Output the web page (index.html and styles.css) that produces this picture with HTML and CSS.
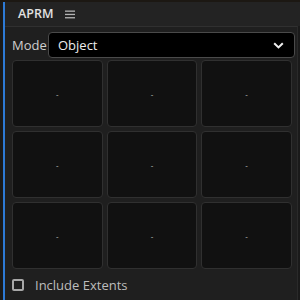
FILE: index.html
```html
<!DOCTYPE html>
<html lang="en">
<head>
  <meta charset="UTF-8" />
  <title>APRM</title>
  <link rel="stylesheet" href="styles.css">
</head>
<body>
  <div class="frame">
    <div class="panel">
      <!-- HEADER -->
      <header class="panel-header">
        <span class="panel-title">APRM</span>
        <span class="menu-icon">
          <svg width="10" height="9" viewBox="0 0 10 9">
            <rect x="0" y="0.5" width="10" height="1.3" fill="#b4b4b4"/>
            <rect x="0" y="3.8" width="10" height="1.3" fill="#b4b4b4"/>
            <rect x="0" y="7.1" width="10" height="1.3" fill="#b4b4b4"/>
          </svg>
        </span>
      </header>

      <!-- CONTENT -->
      <div class="panel-body">
        <div class="mode-row">
          <label class="mode-label">Mode</label>
          <div class="select">
            <span>Object</span>
            <svg class="chevron" width="11" height="7" viewBox="0 0 11 7">
              <path d="M1.2 1.2 L5.5 5.4 L9.8 1.2" fill="none" stroke="#f0f0f0" stroke-width="2"/>
            </svg>
          </div>
        </div>

        <div class="cell-grid">
          <div class="cell"><span class="mark">-</span></div>
          <div class="cell"><span class="mark">-</span></div>
          <div class="cell"><span class="mark">-</span></div>
          <div class="cell"><span class="mark">-</span></div>
          <div class="cell"><span class="mark">-</span></div>
          <div class="cell"><span class="mark">-</span></div>
          <div class="cell"><span class="mark">-</span></div>
          <div class="cell"><span class="mark">-</span></div>
          <div class="cell"><span class="mark">-</span></div>
        </div>

        <div class="footer-row">
          <span class="checkbox"></span>
          <span class="check-label">Include Extents</span>
        </div>
      </div>
    </div>
  </div>
</body>
</html>
```

FILE: styles.css
```css
:root {
  --bg-outer: #1a1a1a;
  --bg-header: #232323;
  --bg-body: #1f1f1f;
  --bg-cell: #111111;
  --line: #303030;
  --accent: #2d7ad6;
  --text: #d6d6d6;
}

* {
  margin: 0;
  padding: 0;
  box-sizing: border-box;
}
body {
  width: 300px;
  height: 300px;
  background-color: var(--bg-outer);
  font-family: "Open Sans", "Noto Sans", Arial, sans-serif;
  color: var(--text);
  overflow: hidden;
}

.frame {
  height: 300px;
  border-top: 2px solid #1c1813;
  padding-left: 3px;
}
.panel {
  height: 298px;
  border-left: 2px solid var(--accent);
  display: flex;
  flex-direction: column;
}

/* HEADER */
.panel-header {
  height: 24px;
  background-color: var(--bg-header);
  display: flex;
  align-items: center;
  padding-left: 13px;
  gap: 12px;
}
.panel-title {
  font-size: 12.5px;
  font-weight: 600;
  color: #e2e2e2;
  line-height: 1;
}
.menu-icon {
  display: flex;
  margin-top: 1px;
}

/* BODY */
.panel-body {
  flex: 1;
  background-color: var(--bg-body);
  border-top: 1px solid var(--line);
  border-right: 1px solid #2a2a2a;
  margin-right: 2px;
  padding: 5px 2px 0 7px;
  display: flex;
  flex-direction: column;
}

.mode-row {
  display: flex;
  align-items: center;
  gap: 6px;
  height: 26px;
}
.mode-label {
  font-size: 13px;
  color: #cfcfcf;
  width: 30px;
}
.select {
  flex: 1;
  height: 26px;
  background-color: #000;
  border: 1px solid #4a4a4a;
  border-radius: 4px;
  display: flex;
  align-items: center;
  justify-content: space-between;
  padding: 0 10px 0 9px;
  font-size: 13px;
  color: #ececec;
}
.chevron {
  display: block;
}

.cell-grid {
  margin-top: 2px;
  width: 280px;
  display: grid;
  grid-template-columns: repeat(3, 1fr);
  grid-template-rows: repeat(3, 67px);
  gap: 4px;
}
.cell {
  background-color: var(--bg-cell);
  border: 1px solid var(--line);
  border-radius: 4px;
  display: flex;
  align-items: center;
  justify-content: center;
}
.mark {
  font-size: 8px;
  line-height: 1;
  color: #c8c8c8;
}

.footer-row {
  flex: 1;
  display: flex;
  align-items: center;
  gap: 11px;
}
.checkbox {
  width: 12px;
  height: 12px;
  border: 2px solid #a8a8a8;
  border-radius: 2px;
}
.check-label {
  font-size: 13px;
  color: #bdbdbd;
}
```
